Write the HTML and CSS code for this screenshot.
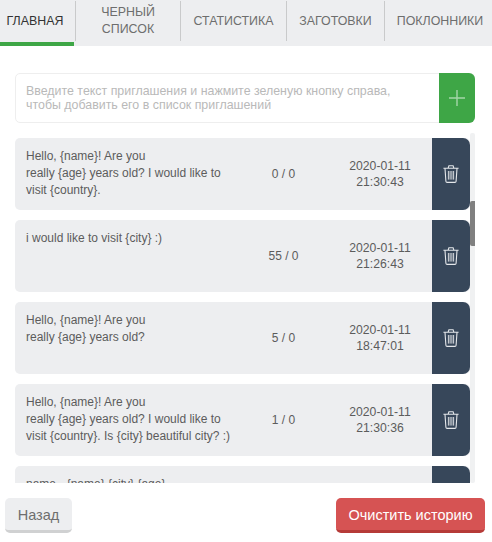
FILE: index.html
```html
<!DOCTYPE html>
<html>
<head>
    <title>Приглашения</title>
    <link rel="stylesheet" href="styles.css">
</head>
<body>
    <svg class="icon-defs" width="0" height="0">
        <symbol id="trash" viewBox="0 0 16 18">
            <path d="M.4 3.2h15.2M5.2 3l.7-2.3h4.2l.7 2.3M2 3.4l.9 12.9a1.2 1.2 0 0 0 1.2 1.1h7.8a1.2 1.2 0 0 0 1.2-1.1L14 3.4" fill="none" stroke="currentColor" stroke-width="1.1"/>
            <path d="M5.4 6v8.6M7.1 6v8.6M8.9 6v8.6M10.6 6v8.6" fill="none" stroke="currentColor" stroke-width=".9"/>
        </symbol>
    </svg>

    <div class="tabs">
        <div class="tab tab-main active">ГЛАВНАЯ</div>
        <div class="tab tab-black">ЧЕРНЫЙ<br>СПИСОК</div>
        <div class="tab tab-stats">СТАТИСТИКА</div>
        <div class="tab tab-drafts">ЗАГОТОВКИ</div>
        <div class="tab tab-fans">ПОКЛОННИКИ</div>
    </div>

    <div class="content">
        <div class="add-box">
            <div class="add-text">Введите текст приглашения и нажмите зеленую кнопку справа,<br>чтобы добавить его в список приглашений</div>
            <div class="add-btn">
                <svg width="16" height="16" viewBox="0 0 16 16"><path d="M8 0v16M0 8h16" stroke="#a5d6a9" stroke-width="1.4"/></svg>
            </div>
        </div>

        <div class="list-wrap">
            <div class="list">
                <div class="row">
                    <div class="msg">Hello, {name}! Are you<br>really {age} years old? I would like to<br>visit {country}.</div>
                    <div class="count">0 / 0</div>
                    <div class="date">2020-01-11<br>21:30:43</div>
                    <div class="del"><svg class="trash"><use href="#trash"/></svg></div>
                </div>
                <div class="row">
                    <div class="msg">i would like to visit {city} :)</div>
                    <div class="count">55 / 0</div>
                    <div class="date">2020-01-11<br>21:26:43</div>
                    <div class="del"><svg class="trash"><use href="#trash"/></svg></div>
                </div>
                <div class="row">
                    <div class="msg">Hello, {name}! Are you<br>really {age} years old?</div>
                    <div class="count">5 / 0</div>
                    <div class="date">2020-01-11<br>18:47:01</div>
                    <div class="del"><svg class="trash"><use href="#trash"/></svg></div>
                </div>
                <div class="row">
                    <div class="msg">Hello, {name}! Are you<br>really {age} years old? I would like to<br>visit {country}. Is {city} beautiful city? :)</div>
                    <div class="count">1 / 0</div>
                    <div class="date">2020-01-11<br>21:30:36</div>
                    <div class="del"><svg class="trash"><use href="#trash"/></svg></div>
                </div>
                <div class="row">
                    <div class="msg">name - {name} {city} {age}</div>
                    <div class="del"></div>
                </div>
            </div>
            <div class="scroll-track"><div class="scroll-thumb"></div></div>
        </div>
    </div>

    <div class="footer">
        <div class="btn btn-back">Назад</div>
        <div class="btn btn-clear">Очистить историю</div>
    </div>
</body>
</html>
```

FILE: styles.css
```css
* { box-sizing: border-box; }
html, body { margin: 0; height: 100%; }
body { width: 492px; height: 542px; overflow: hidden; background: #fff; font-family: "Liberation Sans", Arial, sans-serif; color: #555; }
.icon-defs { display: block; height: 0; }

.tabs { display: flex; height: 46px; background: #edeef0; }
.tab { display: flex; align-items: center; justify-content: center; height: 40px; margin-top: 1px; font-size: 12.4px; line-height: 17px; text-align: center; color: #6e6e6e; border-right: 1px solid #c9cacb; }
.tab-main { width: 76px; padding-right: 5px; }
.tab-black { width: 105px; }
.tab-stats { width: 106px; }
.tab-drafts { width: 98px; }
.tab-fans { flex: 1; padding-left: 3px; border-right: none; }
.tab.active { position: relative; color: #333; }
.tab.active::after { content: ""; position: absolute; left: 0; right: 1px; top: 41px; height: 4px; background: #3ea646; }

.content { padding: 27px 17px 0 15px; }
.add-box { display: flex; height: 50px; border: 1px solid #eeeeee; border-radius: 5px; }
.add-text { flex: 1; padding: 10px 0 0 10px; font-size: 12.4px; line-height: 14px; color: #b9b9b9; }
.add-btn { display: flex; align-items: center; justify-content: center; width: 36px; margin: -1px; background: #3ea646; border-radius: 0 6px 6px 0; }

.list-wrap { position: relative; height: 350px; margin-top: 10px; overflow: hidden; }
.list { padding-top: 5px; }
.row { display: flex; height: 72px; margin-bottom: 10px; margin-right: 5px; background: #edeef0; border-radius: 5px; font-size: 12px; line-height: 17px; color: #5c5c5c; }
.msg { width: 225px; padding: 10px 0 0 11px; }
.count { width: 87px; align-self: center; text-align: center; }
.date { width: 70px; margin-left: 18px; align-self: center; font-size: 12.2px; line-height: 16px; text-align: center; }
.del { display: flex; align-items: center; justify-content: center; width: 38px; margin-left: auto; background: #37475a; border-radius: 0 7px 7px 0; color: #e4e7ea; }
.trash { width: 16px; height: 18px; margin-left: -1px; }

.scroll-track { position: absolute; top: 0; right: 0; width: 5px; height: 350px; background: #f0f1f2; border-radius: 2px; }
.scroll-thumb { position: absolute; top: 68px; left: 0; width: 5px; height: 45px; background: #808080; border-radius: 2px 0 0 2px; }

.footer { display: flex; justify-content: space-between; padding: 15px 7px 0 5px; }
.btn { height: 35px; border-radius: 5px; font-size: 14.5px; line-height: 34px; text-align: center; }
.btn-back { width: 67px; background: #edeef0; color: #6e6e6e; border-bottom: 3px solid #d0d1d2; }
.btn-clear { width: 149px; background: #d65353; color: #fff; border-bottom: 3px solid #b63b38; }
```
